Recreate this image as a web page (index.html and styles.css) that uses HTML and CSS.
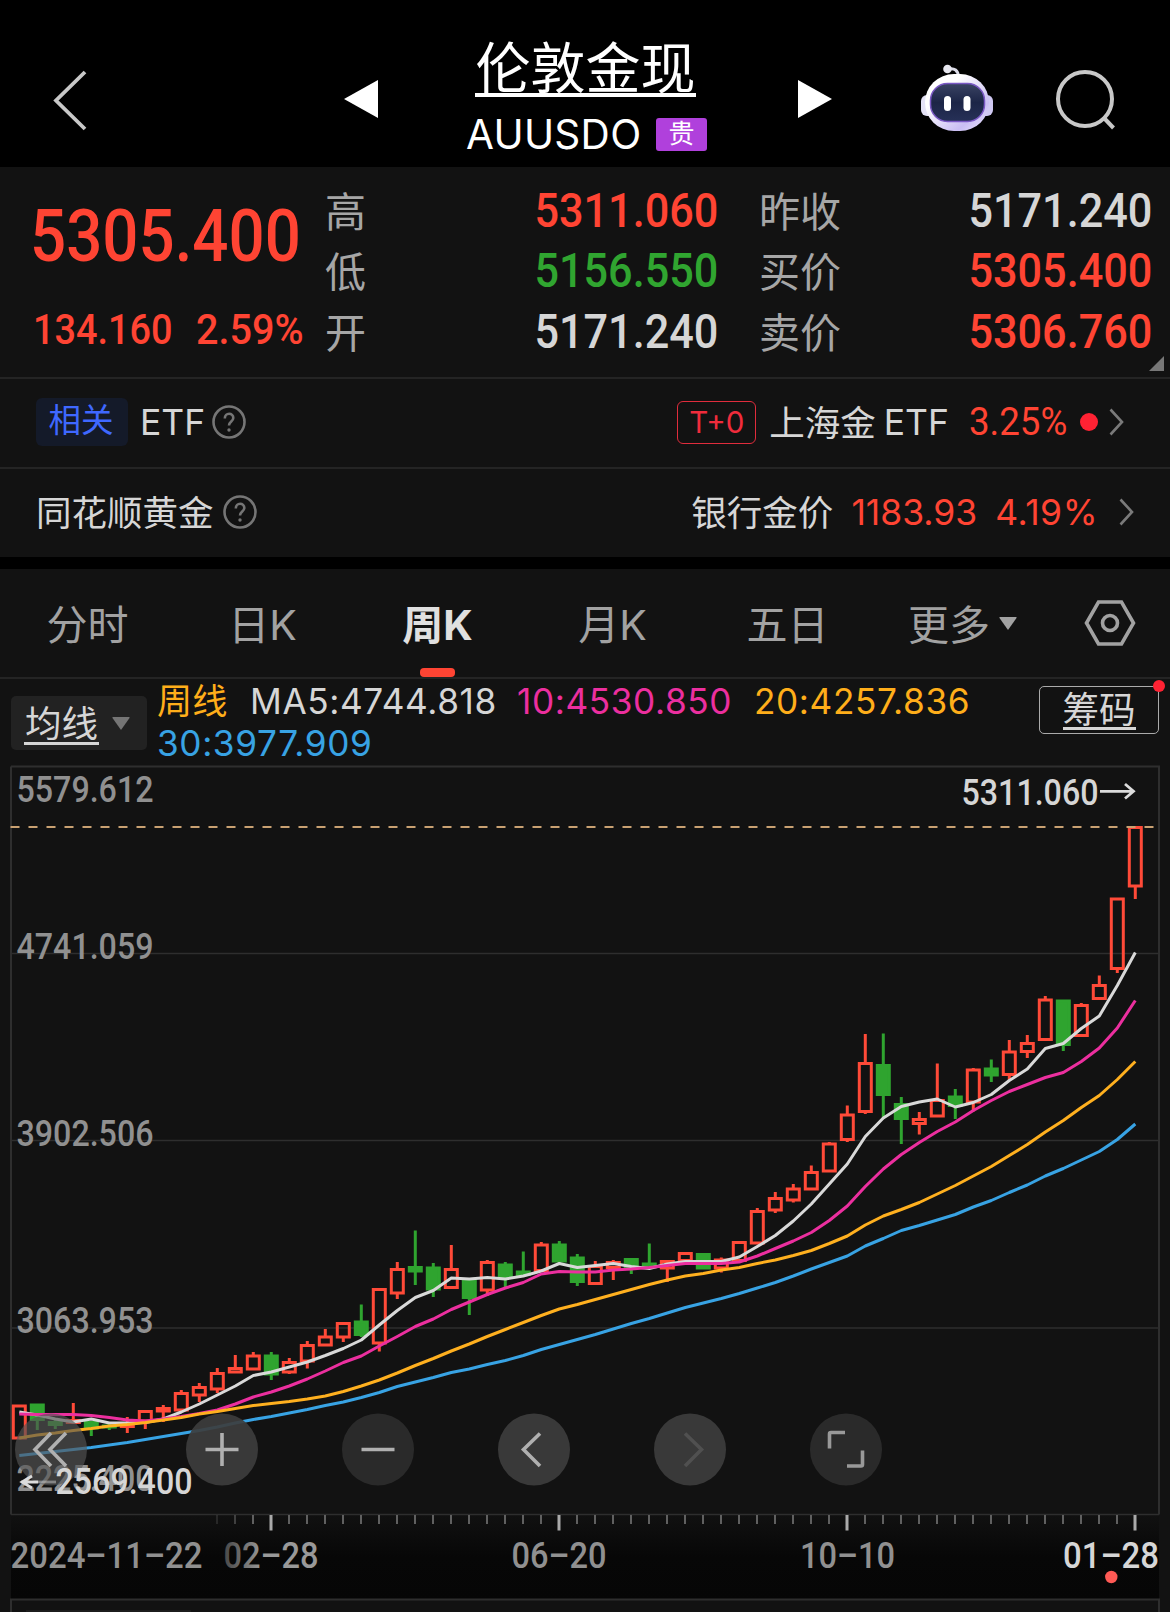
FILE: index.html
```html
<!DOCTYPE html>
<html lang="zh-CN">
<head>
  <meta charset="UTF-8">
  <meta name="viewport" content="width=device-width, initial-scale=1.0">
  <title>伦敦金现 AUUSDO</title>
  <link rel="stylesheet" href="styles.css">
</head>
<body>
  <!-- 顶部导航 -->
  <header class="header">
    <svg class="back" width="40" height="64" viewBox="0 0 40 64"><path d="M35 4 L6 32.500 L35 61" /></svg>
    <svg class="prev" width="34" height="38" viewBox="0 0 34 38"><path d="M34 0 V38 L0 19 Z" /></svg>
    <div class="title">
      <h1>伦敦金现</h1>
      <div class="code"><span class="code-text">AUUSDO</span><span class="tag">贵</span></div>
    </div>
    <svg class="next" width="34" height="38" viewBox="0 0 34 38"><path d="M0 0 V38 L34 19 Z" /></svg>
    <svg class="robot" width="72" height="68" viewBox="0 0 72 68">
      <defs>
        <linearGradient id="shell" x1="0" y1="0" x2="1" y2="1">
          <stop offset="0.3" stop-color="#ffffff" />
          <stop offset="0.75" stop-color="#c9bdf3" />
          <stop offset="1" stop-color="#eeeaff" />
        </linearGradient>
        <linearGradient id="face" x1="0" y1="0" x2="0" y2="1">
          <stop offset="0" stop-color="#3a4363" />
          <stop offset="0.5" stop-color="#1c2547" />
          <stop offset="1" stop-color="#263057" />
        </linearGradient>
      </defs>
      <path d="M27 5 Q37 3 37.500 13" fill="none" stroke="#dcdce8" stroke-width="3" />
      <circle cx="26.500" cy="5" r="4.300" fill="#e6e6ee" />
      <rect x="0" y="31" width="14" height="21" rx="6" fill="#e4e2f6" />
      <rect x="58" y="31" width="14" height="21" rx="6" fill="#cfc8f2" />
      <rect x="4" y="10" width="64" height="57" rx="29" fill="url(#shell)" />
      <rect x="9.500" y="19.500" width="54" height="38" rx="17" fill="url(#face)" stroke="#7a58c4" stroke-width="1.500" />
      <rect x="23" y="32" width="7" height="15" rx="3.500" fill="#fff" />
      <rect x="42.500" y="32" width="7" height="15" rx="3.500" fill="#fff" />
    </svg>
    <svg class="search" width="62" height="62" viewBox="0 0 62 62"><circle cx="30" cy="30" r="27" /><path d="M49 49 L58.500 59" /></svg>
  </header>

  <!-- 报价 -->
  <section class="quote">
    <div class="price">
      <div class="price-now"><span class="num">5305.400</span></div>
      <div class="price-change"><span class="num">134.160</span><span class="num pct">2.59%</span></div>
    </div>
    <dl class="stats">
      <div><dt>高</dt><dd class="num up">5311.060</dd></div>
      <div><dt>低</dt><dd class="num down">5156.550</dd></div>
      <div><dt>开</dt><dd class="num">5171.240</dd></div>
    </dl>
    <dl class="stats">
      <div><dt>昨收</dt><dd class="num">5171.240</dd></div>
      <div><dt>买价</dt><dd class="num up">5305.400</dd></div>
      <div><dt>卖价</dt><dd class="num up">5306.760</dd></div>
    </dl>
    <svg class="corner" width="15" height="15" viewBox="0 0 15 15"><path d="M15 0 V15 H0 Z" /></svg>
  </section>

  <!-- 相关品种 -->
  <section class="link-row">
    <span class="related">相关</span>
    <span class="etf">ETF</span>
    <svg class="help" width="34" height="34" viewBox="0 0 34 34"><circle cx="17" cy="17" r="15.500" /><path d="M12.800 13.500 C12.800 7 21.500 7.500 21.300 13 C21.200 16.500 17 16.500 17 20.500" /><circle class="pt" cx="17" cy="25" r="1.700" /></svg>
    <span class="t0">T+0</span>
    <span class="fund">上海金</span><span class="etf fund-etf">ETF</span>
    <span class="num fund-pct">3.25%</span>
    <i class="live"></i>
    <svg class="more" width="15" height="28" viewBox="0 0 15 28"><path d="M1.500 1.500 L13 14 L1.500 26.500" /></svg>
  </section>
  <section class="link-row gold">
    <span class="gold-name">同花顺黄金</span>
    <svg class="help" width="34" height="34" viewBox="0 0 34 34"><circle cx="17" cy="17" r="15.500" /><path d="M12.800 13.500 C12.800 7 21.500 7.500 21.300 13 C21.200 16.500 17 16.500 17 20.500" /><circle class="pt" cx="17" cy="25" r="1.700" /></svg>
    <span class="bank">银行金价</span>
    <span class="bank-price">1183.93</span>
    <span class="bank-pct">4.19%</span>
    <svg class="more" width="15" height="28" viewBox="0 0 15 28"><path d="M1.500 1.500 L13 14 L1.500 26.500" /></svg>
  </section>

  <!-- 周期切换 -->
  <nav class="tabs">
    <a>分时</a>
    <a>日K</a>
    <a class="active">周K</a>
    <a>月K</a>
    <a>五日</a>
    <a>更多<svg class="caret" width="18" height="13" viewBox="0 0 18 13"><path d="M1 0 H17 Q18 0 17.500 1 L9 13 L0.500 1 Q0 0 1 0 Z" /></svg></a>
    <span class="setting"><svg width="52" height="48" viewBox="0 0 52 48"><path d="M14.500 3 H37.500 L49.500 24 L37.500 45 H14.500 L2.500 24 Z" /><circle cx="26" cy="24" r="7.500" /></svg></span>
  </nav>

  <!-- 均线 -->
  <section class="ma-bar">
    <button class="ma-select"><span>均线</span><svg class="caret" width="18" height="13" viewBox="0 0 18 13"><path d="M1 0 H17 Q18 0 17.500 1 L9 13 L0.500 1 Q0 0 1 0 Z" /></svg></button>
    <div class="ma-values">
      <span class="period">周线</span>
      <span class="ma5">MA5:4744.818</span>
      <span class="ma10">10:4530.850</span>
      <span class="ma20">20:4257.836</span>
      <span class="ma30">30:3977.909</span>
    </div>
    <button class="chips"><span>筹码</span></button>
  </section>

  <!-- K线图 -->
  <main class="chart">
    <svg id="kline" width="1170" height="847" viewBox="0 765 1170 847">
      <defs>
        <linearGradient id="axisBg" x1="0" y1="0" x2="0" y2="1">
          <stop offset="0" stop-color="#111" />
          <stop offset="0.5" stop-color="#070707" />
          <stop offset="1" stop-color="#060606" />
        </linearGradient>
        <linearGradient id="fade" gradientUnits="userSpaceOnUse" x1="222" y1="0" x2="262" y2="0">
          <stop offset="0" stop-color="#444" />
          <stop offset="1" stop-color="#999" />
        </linearGradient>
      </defs>
      <rect x="11" y="1515" width="1148" height="84" fill="url(#axisBg)" />
      <g class="grid">
        <path d="M11 766.500 H1159 V1514.500 M11 766.500 V1514.500" />
        <path class="thin" d="M11 953.500 H1159 M11 1140.500 H1159 M11 1328 H1159 M11 1514.500 H1159" />
        <path d="M11 1612 V1599.500 H1159 V1612" />
      </g>
      <rect x="26" y="1610" width="165" height="2" fill="#1c1c1c" />
      <g class="axis-y">
        <text x="16.500" y="802" textLength="137" lengthAdjust="spacingAndGlyphs">5579.612</text>
        <text x="16.500" y="959" textLength="137" lengthAdjust="spacingAndGlyphs">4741.059</text>
        <text x="16.500" y="1146" textLength="137" lengthAdjust="spacingAndGlyphs">3902.506</text>
        <text x="16.500" y="1333" textLength="137" lengthAdjust="spacingAndGlyphs">3063.953</text>
        <text x="16.500" y="1490.500" textLength="137" lengthAdjust="spacingAndGlyphs">2225.400</text>
      </g>
      <g id="candles"></g>
      <path class="now-line" d="M10.500 827 H1154" />
      <g id="lines"></g>
      <g class="tools">
        <circle class="veil" cx="51" cy="1449.500" r="36" />
        <path d="M51 1433 L35 1449.500 L51 1466 M66 1433 L50 1449.500 L66 1466" />
        <circle cx="222" cy="1449.500" r="36" />
        <path d="M205.500 1449.500 H238.500 M222 1433 V1466" />
        <circle class="dim" cx="378" cy="1449.500" r="36" />
        <path d="M361.500 1449.500 H394.500" />
        <circle cx="534" cy="1449.500" r="36" />
        <path d="M540 1433.500 L523.500 1449.500 L540 1466" />
        <circle cx="690" cy="1449.500" r="36" />
        <path class="off" d="M685 1433.500 L701.500 1449.500 L685 1466" />
        <circle class="dim" cx="846" cy="1449.500" r="36" />
        <path class="soft" d="M829.500 1448.500 V1434 Q829.500 1432.500 831 1432.500 H845 M847 1466 H861 Q862.500 1466 862.500 1464.500 V1450.500" />
      </g>
      <g class="peak">
        <text x="961.500" y="804.500" textLength="137" lengthAdjust="spacingAndGlyphs">5311.060</text>
        <path d="M1100 791.300 H1133 M1125 784 L1133.500 791.300 L1125 798.500" />
        <text x="55.500" y="1494" textLength="137" lengthAdjust="spacingAndGlyphs">2569.400</text>
        <path d="M21 1482 H38 M32 1476 L22 1482 L32 1488" />
        <path class="tail" d="M38 1482 H56" />
      </g>
      <g id="ticks"></g>
      <g class="axis-x">
        <text x="10.500" y="1568" textLength="192" lengthAdjust="spacingAndGlyphs">2024–11–22</text>
        <text x="223.500" y="1567.500" textLength="95" lengthAdjust="spacingAndGlyphs" fill="url(#fade)">02–28</text>
        <text x="511.500" y="1567.500" textLength="95" lengthAdjust="spacingAndGlyphs">06–20</text>
        <text x="800" y="1567.500" textLength="95" lengthAdjust="spacingAndGlyphs">10–10</text>
        <text class="last" x="1063" y="1567.500" textLength="96" lengthAdjust="spacingAndGlyphs">01–28</text>
      </g>
      <circle cx="1111.300" cy="1577" r="6.200" fill="#ff5a55" />
    </svg>
  </main>
  <script src="chart.js"></script>
</body>
</html>
```

FILE: styles.css
```css
* {
  box-sizing: border-box;
}

body {
  margin: 0;
  width: 1170px;
  height: 1612px;
  overflow: hidden;
  background-color: #121212;
  color: #d6d6d6;
  font-family: Inter, "Noto Sans CJK SC", sans-serif;
}

svg {
  display: block;
  flex: none;
}

button {
  padding: 0;
  border: 0;
  background: none;
  color: inherit;
  font: inherit;
}

.num {
  display: inline-block;
  font-family: Roboto, "Noto Sans CJK SC", sans-serif;
  font-weight: 500;
  transform-origin: left center;
  white-space: nowrap;
}

.up {
  color: #ff4433;
}

.down {
  color: #30a530;
}

/* 顶部导航 */
.header {
  display: flex;
  height: 167px;
  background-color: #000;
}

.back {
  margin: 68px 0 0 50px;
  fill: none;
  stroke: #c8c8c8;
  stroke-width: 3.8;
}

.prev,
.next {
  margin-top: 80px;
  fill: #fff;
}

.prev {
  margin-left: 254px;
}

.title {
  width: 250px;
  margin: 37px 0 0 82px;
  color: #fff;
  text-align: center;
}

h1 {
  width: 221px;
  height: 60px;
  margin: 0 0 0 15px;
  border-bottom: 4px solid #fff;
  font-size: 55px;
  font-weight: 400;
  line-height: 62px;
  white-space: nowrap;
}

.code {
  display: flex;
  align-items: center;
  margin-top: 16px;
  height: 42px;
}

.code-text {
  width: 190px;
  margin-left: 6px;
  font-size: 40.5px;
  letter-spacing: 0.3px;
  text-align: left;
}

.tag {
  width: 51px;
  height: 33px;
  border-radius: 3px;
  background-color: #b040dc;
  font-size: 26px;
  line-height: 32px;
  flex: none;
}

.next {
  margin-left: 88px;
}

.robot {
  margin: 64px 0 0 89px;
}

.search {
  margin: 69px 0 0 62px;
  fill: none;
  stroke: #c8c8c8;
  stroke-width: 4;
}

/* 报价 */
.quote {
  position: relative;
  display: flex;
  height: 212px;
  border-bottom: 2px solid #242424;
}

.price {
  width: 325px;
  padding: 26px 0 0 30px;
  color: #ff4433;
}

.price-now {
  height: 84px;
  font-size: 71.5px;
  line-height: 84px;
}

.price-now .num {
  transform: scaleX(0.89);
}

.price-change {
  display: flex;
  margin-top: 26px;
  padding-left: 3px;
  font-size: 43px;
  line-height: 52px;
}

.price-change .num {
  width: 163px;
  transform: scaleX(0.88);
}

.price-change .pct {
  width: auto;
  transform: scaleX(0.92);
}

.stats {
  width: 393px;
  margin: 14px 0 0;
}

.stats + .stats {
  margin-left: 41px;
}

.stats div {
  display: flex;
  justify-content: space-between;
  height: 60.3px;
  line-height: 60px;
}

.stats dt {
  padding-top: 1px;
  color: #a6a6a6;
  font-size: 41px;
}

.stats dd {
  margin: 0;
  font-size: 48px;
  transform: scaleX(0.9);
  transform-origin: right center;
}

.corner {
  position: absolute;
  right: 6px;
  bottom: 6px;
  fill: #777;
}

/* 相关品种 */
.link-row {
  display: flex;
  align-items: center;
  height: 90px;
  padding: 0 46px 2px 36px;
  border-bottom: 2px solid #242424;
  font-size: 35.5px;
}

.link-row.gold {
  height: 88px;
  padding: 0 36px 2px 36px;
  border-bottom: 0;
}

.related {
  width: 92px;
  height: 48px;
  padding-right: 2px;
  border-radius: 6px;
  background-color: #141a29;
  color: #3f68ff;
  font-size: 32.5px;
  line-height: 46px;
  text-align: center;
}

.etf {
  width: 72px;
  margin-left: 12px;
}

.help {
  fill: none;
  stroke: #757575;
  stroke-width: 2.6;
}

.help .pt {
  fill: #757575;
  stroke: none;
}

.t0 {
  width: 79px;
  height: 43px;
  margin-left: auto;
  border: 1.5px solid #e02c3c;
  border-radius: 6px;
  color: #f02c3c;
  font-size: 29.5px;
  line-height: 40px;
  text-align: center;
}

.fund {
  margin-left: 13px;
  padding-bottom: 4px;
}

.fund-etf {
  width: auto;
  margin-left: 8px;
}

.fund-pct {
  width: 111px;
  margin-left: 20px;
  color: #ff4433;
  font-size: 39px;
  font-weight: 400;
  transform: scaleX(0.94);
}

.live {
  width: 18px;
  height: 18px;
  border-radius: 50%;
  background-color: #ff2233;
}

.more {
  margin-left: 11px;
  fill: none;
  stroke: #7a7a7a;
  stroke-width: 2.6;
}

.gold .help {
  margin-left: 9px;
}

.gold-name {
  padding-bottom: 3px;
}

.bank {
  margin-left: auto;
  padding-bottom: 3px;
}

.bank-price,
.bank-pct {
  margin-left: 18px;
  color: #ff4433;
}

.bank-pct {
  letter-spacing: 0.5px;
}

.gold .more {
  margin-left: 21px;
}

/* 周期切换 */
.tabs {
  display: flex;
  height: 122px;
  border-top: 12px solid #000;
  border-bottom: 2px solid #242424;
  color: #a2a2a2;
  font-size: 41px;
}

.tabs a {
  display: flex;
  position: relative;
  align-items: center;
  justify-content: center;
  width: 175px;
  padding-bottom: 3px;
}

.tabs .active {
  color: #e0e0e0;
  font-weight: 700;
}

.tabs .active::after {
  position: absolute;
  bottom: 0;
  left: 70px;
  width: 35px;
  height: 9px;
  border-radius: 4px;
  background-color: #ff4433;
  content: "";
}

.caret {
  margin: 3px 0 0 9px;
  fill: currentColor;
}

.setting {
  display: flex;
  flex: 1;
  align-items: center;
  justify-content: center;
}

.setting svg {
  fill: none;
  stroke: #a2a2a2;
  stroke-width: 3.6;
}

/* 均线 */
.ma-bar {
  display: flex;
  height: 86px;
  font-size: 36.5px;
}

.ma-select {
  display: flex;
  align-items: center;
  width: 136px;
  height: 54px;
  margin: 17px 0 0 11px;
  padding-left: 13px;
  border-radius: 5px;
  background-color: #222;
}

.ma-select span {
  width: 75px;
  height: 44px;
  border-bottom: 3px solid #d6d6d6;
  line-height: 47px;
}

.ma-select .caret {
  margin: 0 0 0 13px;
  fill: #757575;
}

.ma-values {
  display: flex;
  flex-wrap: wrap;
  align-content: flex-start;
  width: 862px;
  margin: 2px 0 0 10px;
  font-size: 35.2px;
  letter-spacing: 0.6px;
  line-height: 41.5px;
}

.period {
  width: 93px;
  color: #ffae1a;
  letter-spacing: 0;
}

.ma5 {
  width: 267px;
}

.ma10 {
  width: 237px;
  color: #ec2f9f;
}

.ma20 {
  width: 240px;
  color: #ffae1a;
}

.ma30 {
  color: #38a3e4;
}

.chips {
  position: relative;
  width: 120px;
  height: 48px;
  margin: 7px 0 0 20px;
  border: 1.5px solid #aaa;
  border-radius: 5px;
}

.chips span {
  display: block;
  width: 73px;
  height: 43px;
  margin: -4px auto 0;
  border-bottom: 3px solid #d6d6d6;
  line-height: 47px;
}

.chips::after {
  position: absolute;
  top: -7px;
  right: -7px;
  width: 12px;
  height: 12px;
  border-radius: 50%;
  background-color: #ff2233;
  content: "";
}

/* K线图 */
.chart text {
  font-family: Roboto, sans-serif;
  font-size: 36px;
  font-weight: 500;
}

.grid path {
  fill: none;
  stroke: #2e2e2e;
  stroke-width: 2;
}

.grid .thin {
  stroke-width: 1.3;
}

.axis-y,
.axis-x {
  fill: #909090;
}

.axis-x .last {
  fill: #d6d6d6;
}

.peak {
  fill: #d6d6d6;
}

.peak path {
  fill: none;
  stroke: #dcdcdc;
  stroke-width: 2.8;
}

.peak .tail {
  opacity: 0.45;
}

.now-line {
  fill: none;
  stroke: #c9a172;
  stroke-width: 1.8;
  stroke-dasharray: 9 9;
}

.candle-up {
  fill: none;
  stroke: #ff4a38;
  stroke-width: 3;
}

.candle-down {
  fill: #2fa42f;
  stroke: #2fa42f;
  stroke-width: 3;
}

.ma-line {
  fill: none;
  stroke-width: 3;
  stroke-linejoin: round;
}

.tools circle {
  fill: #3d3d3d;
  fill-opacity: 0.92;
}

.tools .veil {
  fill: #555;
  fill-opacity: 0.65;
}

.tools .dim {
  fill: #2c2c2c;
}

.tools path {
  fill: none;
  stroke: #b0b0b0;
  stroke-width: 3.6;
}

.tools .off {
  stroke: #505050;
}

.tools .soft {
  stroke: #999;
}
```

FILE: chart.js
```js
const STEP = 18;
const FIRST_X = 19.3;
const NS = 'http://www.w3.org/2000/svg';

// [涨1/跌0, 实体上沿, 实体下沿, 最高, 最低]
const candles = [
  [1, 1404.5, 1439.5, 1404.5, 1439.5], [0, 1403.5, 1421, 1403.5, 1430], [0, 1421, 1426, 1420, 1429],
  [1, 1419, 1424, 1403, 1424], [0, 1421, 1429.5, 1421, 1436], [0, 1424.5, 1428.5, 1423, 1430],
  [1, 1423, 1428, 1417, 1433], [1, 1410, 1422.5, 1410, 1429], [1, 1407, 1412.5, 1405, 1422],
  [1, 1392, 1411.5, 1390, 1411.5], [1, 1386, 1396.5, 1383, 1402], [1, 1372, 1390.5, 1368, 1393],
  [1, 1367, 1373.5, 1355, 1373.5], [1, 1354.5, 1370.5, 1352, 1370.5], [0, 1354.5, 1375.5, 1352, 1380],
  [1, 1361, 1373.5, 1358, 1374], [1, 1344, 1362.5, 1341, 1368.5], [1, 1335.5, 1346.5, 1329, 1346.5],
  [1, 1322, 1338.5, 1322, 1342], [0, 1320.5, 1336, 1304.5, 1337], [1, 1288, 1344.5, 1288, 1351.5],
  [1, 1268, 1294.5, 1262, 1299], [0, 1266, 1272.5, 1230.5, 1285], [0, 1266.5, 1290.5, 1263, 1297],
  [1, 1268, 1289, 1245, 1289], [0, 1278.5, 1299, 1278.5, 1315], [1, 1261, 1291.5, 1260, 1296],
  [0, 1263.5, 1279, 1262, 1287.5], [0, 1270.5, 1276, 1251.5, 1276], [1, 1243.5, 1272, 1242, 1272],
  [0, 1243.5, 1262.5, 1241, 1265], [0, 1256.5, 1283, 1254, 1286], [1, 1265, 1285, 1261, 1285],
  [1, 1261, 1269, 1260, 1280], [0, 1258, 1268, 1258, 1274], [0, 1262.5, 1268, 1243.5, 1268],
  [1, 1260, 1269.5, 1260, 1282], [1, 1252, 1262, 1252, 1262], [0, 1253, 1269.5, 1253, 1269.5],
  [1, 1258.5, 1269.5, 1257.5, 1272.5], [1, 1241, 1262, 1241, 1262], [1, 1210, 1244.5, 1208, 1244.5],
  [1, 1197, 1211.5, 1192, 1213], [1, 1187.5, 1201.5, 1184, 1202.5], [1, 1171, 1190.5, 1165.5, 1190.5],
  [1, 1142.5, 1172.5, 1142, 1172.5], [1, 1113.5, 1141, 1105.5, 1142], [1, 1062, 1113, 1034, 1114],
  [0, 1064, 1096, 1033.5, 1119], [0, 1103, 1120, 1097, 1144], [1, 1118, 1125, 1112, 1134.5],
  [1, 1099, 1117.5, 1063.5, 1117.5], [0, 1095.5, 1107, 1089, 1119], [1, 1068.5, 1103.5, 1068, 1111.5],
  [0, 1067.5, 1076.5, 1059.5, 1082], [1, 1050.5, 1076, 1040, 1080], [1, 1042, 1053, 1035, 1058],
  [1, 998.5, 1041, 996, 1041], [0, 999.5, 1046, 999.5, 1051], [1, 1004, 1037, 1003, 1037],
  [1, 984, 1000, 975.5, 1000], [1, 897.5, 970, 897.5, 973], [1, 826, 887.5, 826, 899]
];

const averages = [
  {
    color: '#38a3e4',
    y: [1455.5, 1453.5, 1451.5, 1449.5, 1447.5, 1445, 1442.5, 1439.5, 1436.5, 1433.5, 1430.5, 1427, 1423, 1419.5, 1416.5, 1413,
      1409.5, 1405.5, 1402, 1397.5, 1392.5, 1386.5, 1382, 1377.5, 1372.5, 1369, 1364.5, 1360.5, 1355.5, 1349.5, 1344.5, 1339.5,
      1334.5, 1329, 1323.5, 1318.5, 1313, 1307.5, 1303, 1298.5, 1293.5, 1288, 1282.5, 1276, 1269, 1262.5, 1256, 1246,
      1238.5, 1230.5, 1225.5, 1220, 1214.5, 1207, 1200.5, 1192.5, 1185, 1176, 1168.5, 1160, 1151.5, 1139.5, 1124]
  },
  {
    color: '#d9d9d9',
    y: [1412, 1415, 1419, 1422, 1419, 1423, 1423, 1422.5, 1419, 1412, 1404, 1395, 1386, 1375.5, 1372, 1367,
      1362, 1355.5, 1348.5, 1340, 1325, 1310.5, 1297.5, 1290.5, 1278, 1279, 1277.5, 1279, 1276, 1271, 1263.5, 1267.5,
      1265.5, 1263.5, 1266.5, 1268.5, 1264, 1261.5, 1261.5, 1261.5, 1257, 1246.5, 1235.5, 1221, 1204, 1184, 1164, 1136.5,
      1118, 1106.5, 1102, 1099, 1107, 1102.5, 1094.5, 1080.5, 1069, 1048.5, 1043.5, 1028.5, 1016, 985.5, 952.5]
  },
  {
    color: '#ec2f9f',
    y: [1414, 1414.5, 1414.5, 1414.5, 1415.5, 1417.5, 1420, 1421, 1419, 1416.5, 1413.5, 1410, 1404, 1397, 1392, 1386,
      1379, 1371, 1362.5, 1356, 1346, 1336.5, 1326.5, 1319, 1309.5, 1302, 1294.5, 1288, 1282.5, 1274, 1271.5, 1272,
      1272, 1270, 1269, 1267.5, 1265.5, 1263.5, 1263.5, 1263.5, 1262, 1256, 1248.5, 1241, 1232.5, 1220.5, 1206, 1186.5,
      1169, 1154.5, 1142.5, 1131.5, 1122, 1110.5, 1100.5, 1091.5, 1084.5, 1077.5, 1072.5, 1061.5, 1048, 1028, 1000.5]
  },
  {
    color: '#ffb01f',
    y: [1438, 1435, 1433, 1430.5, 1428.5, 1426, 1424.5, 1422.5, 1420, 1417.5, 1414, 1411.5, 1408.5, 1405.5, 1403.5, 1401.5,
      1399, 1396, 1391.5, 1386, 1380, 1373, 1365.5, 1358.5, 1351, 1344, 1336.5, 1329.5, 1322.5, 1315.5, 1309, 1304.5,
      1299.5, 1294.5, 1289.5, 1284.5, 1280, 1276, 1273.5, 1270, 1267.5, 1263.5, 1260, 1255.5, 1250.5, 1243.5, 1236, 1225,
      1216, 1209.5, 1202.5, 1194, 1185.5, 1176, 1166.5, 1155.5, 1144.5, 1132, 1120.5, 1107.5, 1095.5, 1079.5, 1061.5]
  }
];

function addPath(parentId, d, attrs) {
  const path = document.createElementNS(NS, 'path');
  path.setAttribute('d', d);
  Object.keys(attrs).forEach((key) => path.setAttribute(key, attrs[key]));
  document.getElementById(parentId).appendChild(path);
}

candles.forEach(([up, top, bottom, high, low], i) => {
  const x = FIRST_X + i * STEP;
  // 描边占一半宽度，实体向内收
  const t = top + 1.4;
  const b = Math.max(bottom - 1.4, t + 0.5);
  const body = `M${x - 6} ${t} H${x + 6} V${b} H${x - 6} Z`;
  const wicks = `M${x} ${high} V${t} M${x} ${b} V${low}`;
  addPath('candles', body + wicks, { class: up ? 'candle-up' : 'candle-down' });
});

averages.forEach(({ color, y }) => {
  const points = y.map((v, i) => `${FIRST_X + i * STEP} ${v}`);
  addPath('lines', 'M' + points.join(' L'), { class: 'ma-line', stroke: color });
});

// 时间轴刻度，每16根一个长刻度
for (let i = 11; i < candles.length; i++) {
  const x = 19 + i * STEP;
  const major = i % 16 === 14;
  addPath('ticks', `M${x} 1515 V${major ? 1530.5 : 1524}`, {
    stroke: major ? '#aaa' : '#606060',
    'stroke-width': major ? 3 : 2,
    opacity: i === 11 ? 0.3 : i === 12 ? 0.6 : 1
  });
}
```
